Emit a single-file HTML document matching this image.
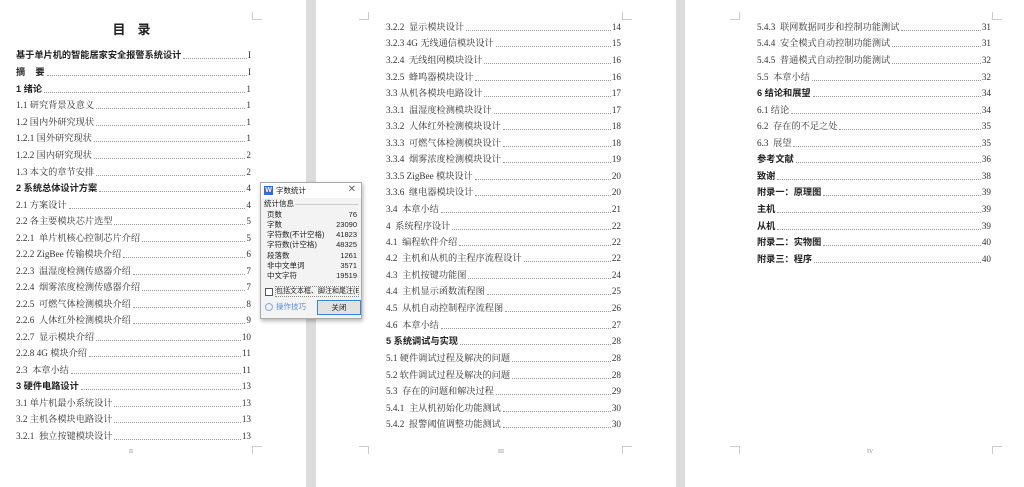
<!DOCTYPE html>
<html><head><meta charset="utf-8"><style>
*{margin:0;padding:0;box-sizing:border-box}
body{width:1024px;height:487px;background:#fff;position:relative;overflow:hidden;font-family:"Liberation Serif","Noto Serif CJK SC",serif;color:#333}
.g{position:absolute;top:0;height:487px;background:#dcdcdc}
.r{position:absolute;height:14px;line-height:14px;font-size:9.2px;display:flex;align-items:flex-end;white-space:nowrap}
.r .l{flex:1;border-bottom:1px dotted #999;margin:0 1px 3px 2px;height:1px}
.b span:first-child{font-family:"Liberation Sans","Noto Sans CJK SC",sans-serif;font-weight:bold;color:#222}
.cm{position:absolute;width:10px;height:8px;border-color:#ccc;border-style:solid;border-width:0}
.pn{position:absolute;font-size:6px;color:#888}
.dlg{position:absolute;left:260px;top:182px;width:102px;height:137px;background:#f3f3f3;border:1px solid #aaa;box-shadow:1px 2px 4px rgba(0,0,0,.3);font-family:"Liberation Sans","Noto Sans CJK SC",sans-serif;font-size:7.5px;color:#222}
.dlg .t{position:absolute;left:0;top:0;width:100%;height:15px;background:#fff}
.dr{position:absolute;left:6px;width:90px;display:flex;justify-content:space-between;line-height:10px}
</style></head><body>
<div class="g" style="left:306px;width:10px"></div>
<div class="g" style="left:676px;width:9px"></div>

<div style="position:absolute;left:105px;top:19px;width:65px;text-align:center;font-size:13px;font-weight:bold;font-family:'Liberation Sans','Noto Sans CJK SC',sans-serif;letter-spacing:12px;color:#222">目录</div>

<!-- page1 -->
<div class="r b" style="left:16px;width:235px;top:48px"><span>基于单片机的智能居家安全报警系统设计</span><span class="l"></span><span>I</span></div>
<div class="r b" style="left:16px;width:235px;top:65px"><span>摘&nbsp;&nbsp;&nbsp;&nbsp;要</span><span class="l"></span><span>I</span></div>
<div class="r b" style="left:16px;width:235px;top:82px"><span>1 绪论</span><span class="l"></span><span>1</span></div>
<div class="r" style="left:16px;width:235px;top:98px"><span>1.1 研究背景及意义</span><span class="l"></span><span>1</span></div>
<div class="r" style="left:16px;width:235px;top:115px"><span>1.2 国内外研究现状</span><span class="l"></span><span>1</span></div>
<div class="r" style="left:16px;width:235px;top:131px"><span>1.2.1 国外研究现状</span><span class="l"></span><span>1</span></div>
<div class="r" style="left:16px;width:235px;top:148px"><span>1.2.2 国内研究现状</span><span class="l"></span><span>2</span></div>
<div class="r" style="left:16px;width:235px;top:165px"><span>1.3 本文的章节安排</span><span class="l"></span><span>2</span></div>
<div class="r b" style="left:16px;width:235px;top:181px"><span>2 系统总体设计方案</span><span class="l"></span><span>4</span></div>
<div class="r" style="left:16px;width:235px;top:198px"><span>2.1 方案设计</span><span class="l"></span><span>4</span></div>
<div class="r" style="left:16px;width:235px;top:214px"><span>2.2 各主要模块芯片选型</span><span class="l"></span><span>5</span></div>
<div class="r" style="left:16px;width:235px;top:231px"><span>2.2.1&nbsp; 单片机核心控制芯片介绍</span><span class="l"></span><span>5</span></div>
<div class="r" style="left:16px;width:235px;top:247px"><span>2.2.2 ZigBee 传输模块介绍</span><span class="l"></span><span>6</span></div>
<div class="r" style="left:16px;width:235px;top:264px"><span>2.2.3&nbsp; 温湿度检测传感器介绍</span><span class="l"></span><span>7</span></div>
<div class="r" style="left:16px;width:235px;top:280px"><span>2.2.4&nbsp; 烟雾浓度检测传感器介绍</span><span class="l"></span><span>7</span></div>
<div class="r" style="left:16px;width:235px;top:297px"><span>2.2.5&nbsp; 可燃气体检测模块介绍</span><span class="l"></span><span>8</span></div>
<div class="r" style="left:16px;width:235px;top:313px"><span>2.2.6&nbsp; 人体红外检测模块介绍</span><span class="l"></span><span>9</span></div>
<div class="r" style="left:16px;width:235px;top:330px"><span>2.2.7&nbsp; 显示模块介绍</span><span class="l"></span><span>10</span></div>
<div class="r" style="left:16px;width:235px;top:346px"><span>2.2.8 4G 模块介绍</span><span class="l"></span><span>11</span></div>
<div class="r" style="left:16px;width:235px;top:363px"><span>2.3&nbsp; 本章小结</span><span class="l"></span><span>11</span></div>
<div class="r b" style="left:16px;width:235px;top:379px"><span>3 硬件电路设计</span><span class="l"></span><span>13</span></div>
<div class="r" style="left:16px;width:235px;top:396px"><span>3.1 单片机最小系统设计</span><span class="l"></span><span>13</span></div>
<div class="r" style="left:16px;width:235px;top:412px"><span>3.2 主机各模块电路设计</span><span class="l"></span><span>13</span></div>
<div class="r" style="left:16px;width:235px;top:429px"><span>3.2.1&nbsp; 独立按键模块设计</span><span class="l"></span><span>13</span></div>

<!-- page2 -->
<div class="r" style="left:386px;width:235px;top:20px"><span>3.2.2&nbsp; 显示模块设计</span><span class="l"></span><span>14</span></div>
<div class="r" style="left:386px;width:235px;top:36px"><span>3.2.3 4G 无线通信模块设计</span><span class="l"></span><span>15</span></div>
<div class="r" style="left:386px;width:235px;top:53px"><span>3.2.4&nbsp; 无线组网模块设计</span><span class="l"></span><span>16</span></div>
<div class="r" style="left:386px;width:235px;top:70px"><span>3.2.5&nbsp; 蜂鸣器模块设计</span><span class="l"></span><span>16</span></div>
<div class="r" style="left:386px;width:235px;top:86px"><span>3.3 从机各模块电路设计</span><span class="l"></span><span>17</span></div>
<div class="r" style="left:386px;width:235px;top:103px"><span>3.3.1&nbsp; 温湿度检测模块设计</span><span class="l"></span><span>17</span></div>
<div class="r" style="left:386px;width:235px;top:119px"><span>3.3.2&nbsp; 人体红外检测模块设计</span><span class="l"></span><span>18</span></div>
<div class="r" style="left:386px;width:235px;top:136px"><span>3.3.3&nbsp; 可燃气体检测模块设计</span><span class="l"></span><span>18</span></div>
<div class="r" style="left:386px;width:235px;top:152px"><span>3.3.4&nbsp; 烟雾浓度检测模块设计</span><span class="l"></span><span>19</span></div>
<div class="r" style="left:386px;width:235px;top:169px"><span>3.3.5 ZigBee 模块设计</span><span class="l"></span><span>20</span></div>
<div class="r" style="left:386px;width:235px;top:185px"><span>3.3.6&nbsp; 继电器模块设计</span><span class="l"></span><span>20</span></div>
<div class="r" style="left:386px;width:235px;top:202px"><span>3.4&nbsp; 本章小结</span><span class="l"></span><span>21</span></div>
<div class="r" style="left:386px;width:235px;top:219px"><span>4&nbsp; 系统程序设计</span><span class="l"></span><span>22</span></div>
<div class="r" style="left:386px;width:235px;top:235px"><span>4.1&nbsp; 编程软件介绍</span><span class="l"></span><span>22</span></div>
<div class="r" style="left:386px;width:235px;top:251px"><span>4.2&nbsp; 主机和从机的主程序流程设计</span><span class="l"></span><span>22</span></div>
<div class="r" style="left:386px;width:235px;top:268px"><span>4.3&nbsp; 主机按键功能图</span><span class="l"></span><span>24</span></div>
<div class="r" style="left:386px;width:235px;top:284px"><span>4.4&nbsp; 主机显示函数流程图</span><span class="l"></span><span>25</span></div>
<div class="r" style="left:386px;width:235px;top:301px"><span>4.5&nbsp; 从机自动控制程序流程图</span><span class="l"></span><span>26</span></div>
<div class="r" style="left:386px;width:235px;top:318px"><span>4.6&nbsp; 本章小结</span><span class="l"></span><span>27</span></div>
<div class="r b" style="left:386px;width:235px;top:334px"><span>5 系统调试与实现</span><span class="l"></span><span>28</span></div>
<div class="r" style="left:386px;width:235px;top:351px"><span>5.1 硬件调试过程及解决的问题</span><span class="l"></span><span>28</span></div>
<div class="r" style="left:386px;width:235px;top:368px"><span>5.2 软件调试过程及解决的问题</span><span class="l"></span><span>28</span></div>
<div class="r" style="left:386px;width:235px;top:384px"><span>5.3&nbsp; 存在的问题和解决过程</span><span class="l"></span><span>29</span></div>
<div class="r" style="left:386px;width:235px;top:401px"><span>5.4.1&nbsp; 主从机初始化功能测试</span><span class="l"></span><span>30</span></div>
<div class="r" style="left:386px;width:235px;top:417px"><span>5.4.2&nbsp; 报警阈值调整功能测试</span><span class="l"></span><span>30</span></div>

<!-- page3 -->
<div class="r" style="left:757px;width:234px;top:20px"><span>5.4.3&nbsp; 联网数据同步和控制功能测试</span><span class="l"></span><span>31</span></div>
<div class="r" style="left:757px;width:234px;top:36px"><span>5.4.4&nbsp; 安全模式自动控制功能测试</span><span class="l"></span><span>31</span></div>
<div class="r" style="left:757px;width:234px;top:53px"><span>5.4.5&nbsp; 普通模式自动控制功能测试</span><span class="l"></span><span>32</span></div>
<div class="r" style="left:757px;width:234px;top:70px"><span>5.5&nbsp; 本章小结</span><span class="l"></span><span>32</span></div>
<div class="r b" style="left:757px;width:234px;top:86px"><span>6 结论和展望</span><span class="l"></span><span>34</span></div>
<div class="r" style="left:757px;width:234px;top:103px"><span>6.1 结论</span><span class="l"></span><span>34</span></div>
<div class="r" style="left:757px;width:234px;top:119px"><span>6.2&nbsp; 存在的不足之处</span><span class="l"></span><span>35</span></div>
<div class="r" style="left:757px;width:234px;top:136px"><span>6.3&nbsp; 展望</span><span class="l"></span><span>35</span></div>
<div class="r b" style="left:757px;width:234px;top:152px"><span>参考文献</span><span class="l"></span><span>36</span></div>
<div class="r b" style="left:757px;width:234px;top:169px"><span>致谢</span><span class="l"></span><span>38</span></div>
<div class="r b" style="left:757px;width:234px;top:185px"><span>附录一：原理图</span><span class="l"></span><span>39</span></div>
<div class="r b" style="left:757px;width:234px;top:202px"><span>主机</span><span class="l"></span><span>39</span></div>
<div class="r b" style="left:757px;width:234px;top:219px"><span>从机</span><span class="l"></span><span>39</span></div>
<div class="r b" style="left:757px;width:234px;top:235px"><span>附录二：实物图</span><span class="l"></span><span>40</span></div>
<div class="r b" style="left:757px;width:234px;top:252px"><span>附录三：程序</span><span class="l"></span><span>40</span></div>

<!-- corner marks -->
<div class="cm" style="left:252px;top:12px;border-left-width:1px;border-bottom-width:1px"></div>
<div class="cm" style="left:252px;top:446px;border-left-width:1px;border-top-width:1px"></div>
<div class="cm" style="left:359px;top:12px;border-right-width:1px;border-bottom-width:1px"></div>
<div class="cm" style="left:622px;top:12px;border-left-width:1px;border-bottom-width:1px"></div>
<div class="cm" style="left:359px;top:446px;border-right-width:1px;border-top-width:1px"></div>
<div class="cm" style="left:622px;top:446px;border-left-width:1px;border-top-width:1px"></div>
<div class="cm" style="left:730px;top:12px;border-right-width:1px;border-bottom-width:1px"></div>
<div class="cm" style="left:992px;top:12px;border-left-width:1px;border-bottom-width:1px"></div>
<div class="cm" style="left:730px;top:446px;border-right-width:1px;border-top-width:1px"></div>
<div class="cm" style="left:992px;top:446px;border-left-width:1px;border-top-width:1px"></div>

<div class="pn" style="left:129px;top:449px">II</div>
<div class="pn" style="left:498px;top:449px">III</div>
<div class="pn" style="left:867px;top:449px">IV</div>

<!-- dialog -->
<div class="dlg">
<div class="t">
<div style="position:absolute;left:3px;top:3px;width:9px;height:9px;background:#2b6fd6;color:#fff;font-size:7px;font-weight:bold;text-align:center;line-height:9px">W</div>
<div style="position:absolute;left:15px;top:2px;line-height:11px">字数统计</div>
<div style="position:absolute;right:5px;top:1px;font-size:10px;color:#666;line-height:12px">✕</div>
</div>
<div style="position:absolute;left:3px;top:16px;line-height:10px">统计信息</div>
<div style="position:absolute;left:34px;top:21px;width:63px;border-top:1px solid #ccc"></div>
<div class="dr" style="top:27px"><span>页数</span><span>76</span></div>
<div class="dr" style="top:37px"><span>字数</span><span>23090</span></div>
<div class="dr" style="top:47px"><span>字符数(不计空格)</span><span>41823</span></div>
<div class="dr" style="top:57px"><span>字符数(计空格)</span><span>48325</span></div>
<div class="dr" style="top:68px"><span>段落数</span><span>1261</span></div>
<div class="dr" style="top:78px"><span>非中文单词</span><span>3571</span></div>
<div class="dr" style="top:88px"><span>中文字符</span><span>19519</span></div>
<div style="position:absolute;left:4px;top:105px;width:8px;height:8px;border:1px solid #555;background:#fff"></div>
<div style="position:absolute;left:14px;top:103px;width:84px;height:11px;border:1px dotted #888;line-height:10px;font-size:7px;white-space:nowrap;overflow:hidden">包括文本框、脚注和尾注(E)</div>
<div style="position:absolute;left:4px;top:120px;width:8px;height:8px;border:1px solid #8aa8d8;border-radius:50%"></div>
<div style="position:absolute;left:15px;top:119px;color:#5b8fd8;line-height:10px">操作技巧</div>
<div style="position:absolute;left:56px;top:117px;width:44px;height:15px;border:1px solid #3a86d6;background:#e2e2e2;text-align:center;line-height:13px">关闭</div>
</div>
</body></html>
